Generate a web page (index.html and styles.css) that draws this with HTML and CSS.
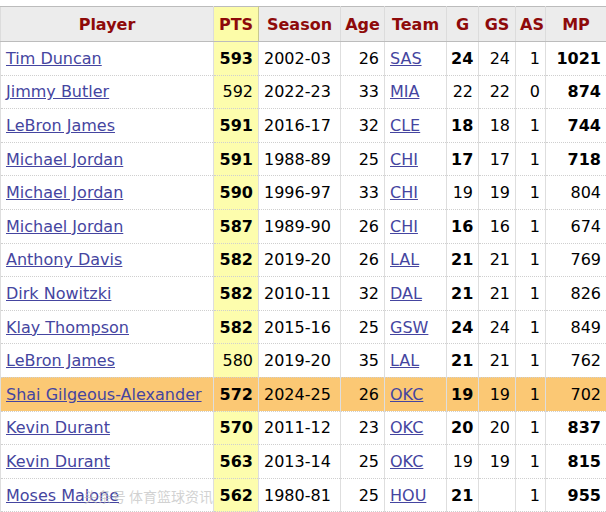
FILE: index.html
```html
<!DOCTYPE html>
<html>
<head>
<meta charset="utf-8">
<link rel="stylesheet" href="styles.css">
</head>
<body>
<div class="wrap">
<table class="stats">
<colgroup>
<col class="c-player"><col class="c-pts"><col class="c-season"><col class="c-age"><col class="c-team"><col class="c-g"><col class="c-gs"><col class="c-as"><col class="c-mp">
</colgroup>
<thead>
<tr><th class="player">Player</th><th class="pts">PTS</th><th>Season</th><th>Age</th><th>Team</th><th>G</th><th>GS</th><th>AS</th><th>MP</th></tr>
</thead>
<tbody>
<tr><td class="l"><a>Tim Duncan</a></td><td class="pts b">593</td><td class="l">2002-03</td><td>26</td><td class="l"><a>SAS</a></td><td class="b">24</td><td>24</td><td>1</td><td class="b">1021</td></tr>
<tr><td class="l"><a>Jimmy Butler</a></td><td class="pts">592</td><td class="l">2022-23</td><td>33</td><td class="l"><a>MIA</a></td><td>22</td><td>22</td><td>0</td><td class="b">874</td></tr>
<tr><td class="l"><a>LeBron James</a></td><td class="pts b">591</td><td class="l">2016-17</td><td>32</td><td class="l"><a>CLE</a></td><td class="b">18</td><td>18</td><td>1</td><td class="b">744</td></tr>
<tr><td class="l"><a>Michael Jordan</a></td><td class="pts b">591</td><td class="l">1988-89</td><td>25</td><td class="l"><a>CHI</a></td><td class="b">17</td><td>17</td><td>1</td><td class="b">718</td></tr>
<tr><td class="l"><a>Michael Jordan</a></td><td class="pts b">590</td><td class="l">1996-97</td><td>33</td><td class="l"><a>CHI</a></td><td>19</td><td>19</td><td>1</td><td>804</td></tr>
<tr><td class="l"><a>Michael Jordan</a></td><td class="pts b">587</td><td class="l">1989-90</td><td>26</td><td class="l"><a>CHI</a></td><td class="b">16</td><td>16</td><td>1</td><td>674</td></tr>
<tr><td class="l"><a>Anthony Davis</a></td><td class="pts b">582</td><td class="l">2019-20</td><td>26</td><td class="l"><a>LAL</a></td><td class="b">21</td><td>21</td><td>1</td><td>769</td></tr>
<tr><td class="l"><a>Dirk Nowitzki</a></td><td class="pts b">582</td><td class="l">2010-11</td><td>32</td><td class="l"><a>DAL</a></td><td class="b">21</td><td>21</td><td>1</td><td>826</td></tr>
<tr><td class="l"><a>Klay Thompson</a></td><td class="pts b">582</td><td class="l">2015-16</td><td>25</td><td class="l"><a>GSW</a></td><td class="b">24</td><td>24</td><td>1</td><td>849</td></tr>
<tr><td class="l"><a>LeBron James</a></td><td class="pts">580</td><td class="l">2019-20</td><td>35</td><td class="l"><a>LAL</a></td><td class="b">21</td><td>21</td><td>1</td><td>762</td></tr>
<tr class="hl"><td class="l"><a>Shai Gilgeous-Alexander</a></td><td class="pts b">572</td><td class="l">2024-25</td><td>26</td><td class="l"><a>OKC</a></td><td class="b">19</td><td>19</td><td>1</td><td>702</td></tr>
<tr><td class="l"><a>Kevin Durant</a></td><td class="pts b">570</td><td class="l">2011-12</td><td>23</td><td class="l"><a>OKC</a></td><td class="b">20</td><td>20</td><td>1</td><td class="b">837</td></tr>
<tr><td class="l"><a>Kevin Durant</a></td><td class="pts b">563</td><td class="l">2013-14</td><td>25</td><td class="l"><a>OKC</a></td><td>19</td><td>19</td><td>1</td><td class="b">815</td></tr>
<tr><td class="l wm-cell"><a>Moses Malone</a><span class="watermark">头条号 体育篮球资讯</span></td><td class="pts b">562</td><td class="l">1980-81</td><td>25</td><td class="l"><a>HOU</a></td><td class="b">21</td><td></td><td>1</td><td class="b">955</td></tr>
</tbody>
</table>
</div>
</body>
</html>
```
FILE: styles.css
```css
html, body {
  margin: 0;
  padding: 0;
  background: #fff;
}
.wrap {
  padding-top: 6px;
  overflow: hidden;
}
.stats {
  border-collapse: collapse;
  table-layout: fixed;
  width: 606px;
  font-family: "DejaVu Sans", Verdana, sans-serif;
  font-size: 16px;
  color: #000;
}
.c-player { width: 213px; }
.c-pts { width: 45px; }
.c-season { width: 82px; }
.c-age { width: 44px; }
.c-team { width: 62px; }
.c-g { width: 32px; }
.c-gs { width: 37px; }
.c-as { width: 30px; }
.c-mp { width: 61px; }

.stats th {
  background: #ececec;
  color: #8e0a0a;
  font-weight: bold;
  height: 34px;
  padding: 0 4px;
  border-top: 1px solid #bcbcbc;
  border-bottom: 1px solid #bcbcbc;
  border-left: 1px solid #dcdcdc;
  border-right: 1px solid #dcdcdc;
  text-align: center;
  white-space: nowrap;
}
.stats th.pts {
  background: #fcfca8;
  border-left: 1px solid #c8c890;
  border-right: 1px solid #c8c890;
}
.stats td {
  height: 32.6px;
  padding: 0 5px 0 4px;
  text-align: right;
  white-space: nowrap;
  border-bottom: 1px dotted #cfcfcf;
  border-left: 1px solid #dedede;
  border-right: 1px solid #dedede;
}
.stats td.l {
  text-align: left;
  padding-left: 5px;
}
.stats td.pts {
  background: #fdfdad;
}
.stats td.b {
  font-weight: bold;
}
.stats a {
  color: #4545a0;
  text-decoration: underline;
}
.stats tr.hl td {
  background: #fbc874;
}
.wm-cell {
  position: relative;
}
.watermark {
  position: absolute;
  right: 0;
  top: 8px;
  font-family: "Noto Sans CJK SC", sans-serif;
  font-size: 14px;
  line-height: 18px;
  color: rgba(190, 190, 190, 0.7);
  white-space: nowrap;
}
```
